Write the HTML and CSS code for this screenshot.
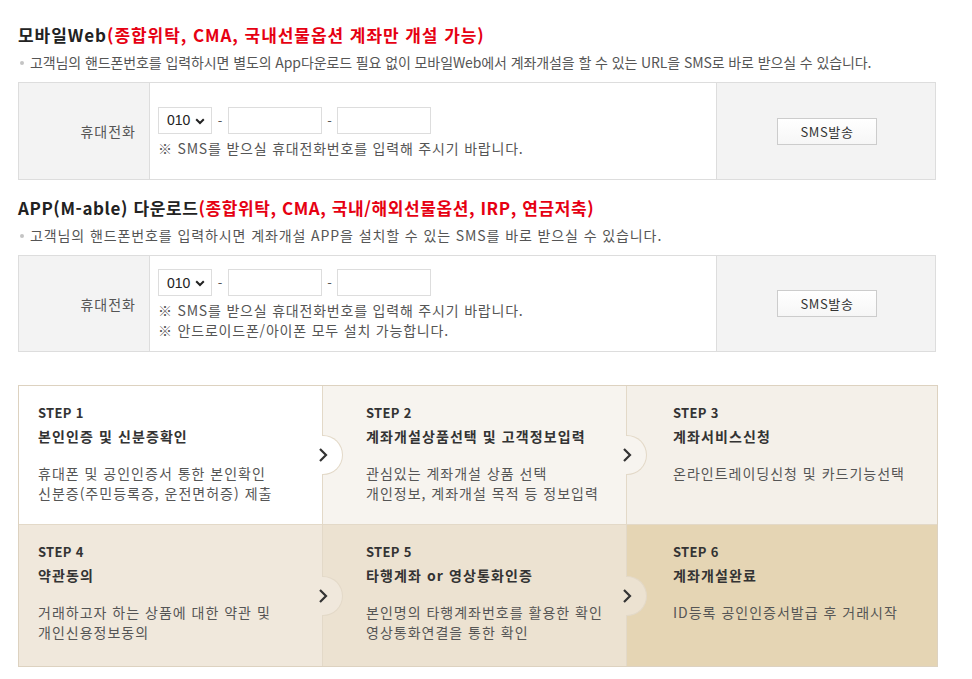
FILE: index.html
```html
<!DOCTYPE html>
<html lang="ko">
<head>
<meta charset="utf-8">
<title>계좌개설</title>
<link rel="stylesheet" href="styles.css">
</head>
<body>
<div class="page">
  <section class="sec">
    <h2 class="sec-title sec-title-web">모바일Web<span class="red">(종합위탁, CMA, 국내선물옵션 계좌만 개설 가능)</span></h2>
    <p class="bullet">고객님의 핸드폰번호를 입력하시면 별도의 App다운로드 필요 없이 모바일Web에서 계좌개설을 할 수 있는 URL을 SMS로 바로 받으실 수 있습니다.</p>
    <div class="form-row">
      <div class="th">휴대전화</div>
      <div class="td">
        <div class="phone">
          <span class="sel"><select><option>010</option><option>011</option><option>016</option></select><svg class="caret" width="10" height="7" viewBox="0 0 10 7"><path d="M1.2 1.3 5 5 8.8 1.3" fill="none" stroke="#222" stroke-width="2"/></svg></span>
          <span class="dash">-</span>
          <input class="num" type="text">
          <span class="dash">-</span>
          <input class="num" type="text">
        </div>
        <p class="note">※ SMS를 받으실 휴대전화번호를 입력해 주시기 바랍니다.</p>
      </div>
      <div class="act"><button class="btn" type="button">SMS발송</button></div>
    </div>
  </section>

  <section class="sec sec2">
    <h2 class="sec-title">APP(M-able) 다운로드<span class="red">(종합위탁, CMA, 국내/해외선물옵션, IRP, 연금저축)</span></h2>
    <p class="bullet bullet-app">고객님의 핸드폰번호를 입력하시면 계좌개설 APP을 설치할 수 있는 SMS를 바로 받으실 수 있습니다.</p>
    <div class="form-row">
      <div class="th">휴대전화</div>
      <div class="td">
        <div class="phone">
          <span class="sel"><select><option>010</option><option>011</option><option>016</option></select><svg class="caret" width="10" height="7" viewBox="0 0 10 7"><path d="M1.2 1.3 5 5 8.8 1.3" fill="none" stroke="#222" stroke-width="2"/></svg></span>
          <span class="dash">-</span>
          <input class="num" type="text">
          <span class="dash">-</span>
          <input class="num" type="text">
        </div>
        <p class="note">※ SMS를 받으실 휴대전화번호를 입력해 주시기 바랍니다.</p>
        <p class="note note2">※ 안드로이드폰/아이폰 모두 설치 가능합니다.</p>
      </div>
      <div class="act"><button class="btn" type="button">SMS발송</button></div>
    </div>
  </section>

  <ol class="steps">
    <li class="step s1">
      <p class="step-no">STEP 1</p>
      <p class="step-tit">본인인증 및 신분증확인</p>
      <p class="step-desc">휴대폰 및 공인인증서 통한 본인확인<br>신분증(주민등록증, 운전면허증) 제출</p>
      <span class="bump"><svg width="10" height="16" viewBox="0 0 10 16"><path d="M2 2 8 8 2 14" fill="none" stroke="#333" stroke-width="2.2"/></svg></span>
    </li>
    <li class="step s2">
      <p class="step-no">STEP 2</p>
      <p class="step-tit">계좌개설상품선택 및 고객정보입력</p>
      <p class="step-desc">관심있는 계좌개설 상품 선택<br>개인정보, 계좌개설 목적 등 정보입력</p>
      <span class="bump"><svg width="10" height="16" viewBox="0 0 10 16"><path d="M2 2 8 8 2 14" fill="none" stroke="#333" stroke-width="2.2"/></svg></span>
    </li>
    <li class="step s3">
      <p class="step-no">STEP 3</p>
      <p class="step-tit">계좌서비스신청</p>
      <p class="step-desc">온라인트레이딩신청 및 카드기능선택</p>
    </li>
    <li class="step s4">
      <p class="step-no">STEP 4</p>
      <p class="step-tit">약관동의</p>
      <p class="step-desc">거래하고자 하는 상품에 대한 약관 및<br>개인신용정보동의</p>
      <span class="bump"><svg width="10" height="16" viewBox="0 0 10 16"><path d="M2 2 8 8 2 14" fill="none" stroke="#333" stroke-width="2.2"/></svg></span>
    </li>
    <li class="step s5">
      <p class="step-no">STEP 5</p>
      <p class="step-tit">타행계좌 or 영상통화인증</p>
      <p class="step-desc">본인명의 타행계좌번호를 활용한 확인<br>영상통화연결을 통한 확인</p>
      <span class="bump"><svg width="10" height="16" viewBox="0 0 10 16"><path d="M2 2 8 8 2 14" fill="none" stroke="#333" stroke-width="2.2"/></svg></span>
    </li>
    <li class="step s6">
      <p class="step-no">STEP 6</p>
      <p class="step-tit">계좌개설완료</p>
      <p class="step-desc">ID등록 공인인증서발급 후 거래시작</p>
    </li>
  </ol>
</div>
</body>
</html>
```

FILE: styles.css
```css
* { box-sizing: border-box; }
html, body { margin: 0; padding: 0; background: #fff; }
body {
  font-family: "Noto Sans CJK KR", "Noto Sans", sans-serif;
  color: #333;
  font-size: 14px;
}
p { margin: 0; }
.page {
  width: 936px;
  padding: 24px 0 0 18px;
}
.sec-title {
  margin: 0;
  font-size: 17px;
  line-height: 22px;
  font-weight: 700;
  color: #222;
  letter-spacing: 0.6px;
}
.sec-title-web { letter-spacing: 0.95px; }
.red { color: #e60012; }
.sec2 { margin-top: 17px; }
.bullet {
  margin-top: 6px;
  position: relative;
  padding-left: 12px;
  font-size: 14px;
  line-height: 20px;
  color: #555;
  letter-spacing: -0.1px;
}
.bullet-app { letter-spacing: 0.9px; }
.bullet::before {
  content: "";
  position: absolute;
  left: 2px;
  top: 9px;
  width: 4px;
  height: 4px;
  border-radius: 50%;
  background: #c4c4c4;
}
.form-row {
  margin-top: 10px;
  display: grid;
  grid-template-columns: 130px 568px 1fr;
  border: 1px solid #ddd;
  min-height: 98px;
}
.sec2 .form-row { min-height: 97px; }
.th {
  background: #f3f3f3;
  display: flex;
  align-items: center;
  justify-content: flex-end;
  padding-right: 13px;
  color: #555;
  font-size: 14px;
  letter-spacing: 1px;
}
.td {
  border-left: 1px solid #ddd;
  border-right: 1px solid #ddd;
  padding: 4px 8px 2px;
  display: flex;
  flex-direction: column;
  justify-content: center;
}
.phone {
  display: flex;
  align-items: center;
}
.sel {
  position: relative;
  display: block;
  height: 27px;
}
.sel select {
  appearance: none;
  -webkit-appearance: none;
  display: block;
  width: 54px;
  height: 27px;
  border: 1px solid #ddd;
  background: #fff;
  padding: 0 0 0 8px;
  font-family: "Liberation Sans", Arial, sans-serif;
  font-size: 14px;
  color: #222;
  border-radius: 0;
  outline: none;
}
.caret {
  position: absolute;
  left: 37px;
  top: 11px;
  pointer-events: none;
}
.dash {
  width: 16px;
  text-align: center;
  color: #555;
  font-size: 13px;
}
.num {
  display: block;
  width: 94px;
  height: 27px;
  border: 1px solid #ddd;
  background: #fff;
  padding: 0 6px;
  outline: none;
  border-radius: 0;
  margin: 0;
}
.num + .dash { width: 15px; }
.note {
  margin-top: 4px;
  font-size: 14px;
  line-height: 20px;
  color: #555;
  letter-spacing: 0.8px;
}
.note2 { margin-top: 0; }
.act {
  background: #f3f3f3;
  display: flex;
  align-items: center;
  justify-content: center;
  padding-left: 2px;
}
.btn {
  width: 100px;
  height: 27px;
  border: 1px solid #ccc;
  background: linear-gradient(#fff, #f6f6f6);
  font-family: "Noto Sans CJK KR", sans-serif;
  font-size: 13px;
  color: #333;
  padding: 0;
  letter-spacing: 0.6px;
}

.steps {
  list-style: none;
  margin: 33px 0 0;
  padding: 0;
  width: 920px;
  display: grid;
  grid-template-columns: 304px 304px 1fr;
  grid-template-rows: 139px 141px;
  border: 1px solid #ddd2c0;
}
.step {
  position: relative;
  padding: 17px 6px 0 19px;
}
.s1, .s2, .s4, .s5 { border-right: 1px solid #e3d9c8; }
.s1, .s2, .s3 { border-bottom: 1px solid #e3d9c8; }
.s2, .s5 { padding-left: 43px; }
.s3, .s6 { padding-left: 46px; }
.s1 { background: #fff; }
.s2 { background: #f7f4ef; }
.s3 { background: #f4f0e9; }
.s4 { background: #f0e8dc; }
.s5 { background: #ece2d1; }
.s6 { background: #e5d5b4; }
.step-no {
  font-size: 13px;
  line-height: 20px;
  font-weight: 700;
  color: #333;
  letter-spacing: 0.3px;
}
.step-tit {
  margin-top: 3px;
  font-size: 14px;
  line-height: 20px;
  font-weight: 700;
  color: #333;
  letter-spacing: 1.1px;
}
.step-desc {
  margin-top: 17px;
  font-size: 14px;
  line-height: 20px;
  color: #555;
  letter-spacing: 1px;
}
.bump {
  position: absolute;
  z-index: 1;
  left: 100%;
  top: 50%;
  margin-top: -20px;
  width: 21px;
  height: 40px;
  border: 1px solid #e3d9c8;
  border-left: 0;
  border-radius: 0 20px 20px 0;
  background: inherit;
}
.bump svg {
  position: absolute;
  left: -4px;
  top: 11px;
}
```
